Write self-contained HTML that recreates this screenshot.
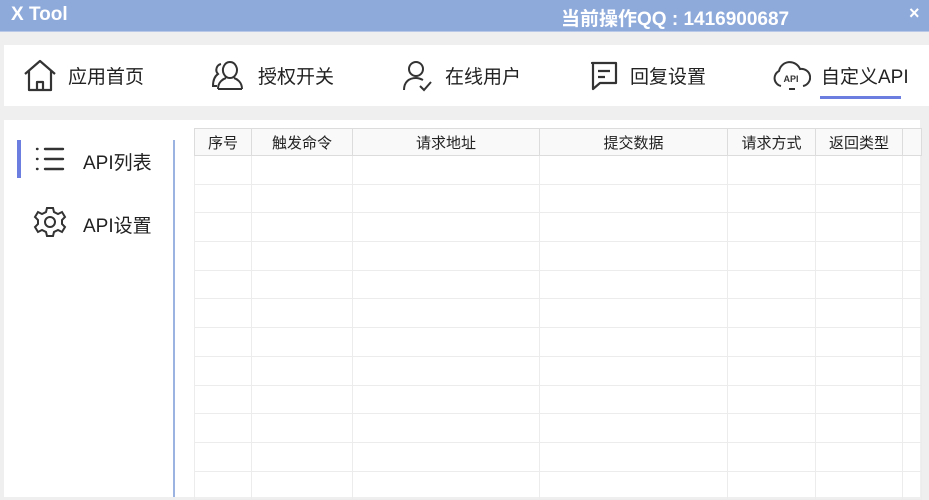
<!DOCTYPE html>
<html><head><meta charset="utf-8"><style>
*{margin:0;padding:0;box-sizing:border-box}
body{width:929px;height:497px;background:#efefef;font-family:"Liberation Sans","Noto Sans CJK SC",sans-serif;position:relative;overflow:hidden;color:#222}
.title{position:absolute;left:0;top:0;width:929px;height:32px;background:#8eaadb;border-bottom:1px solid #b8c8e6;color:#fff;font-weight:bold}
.abs{position:absolute}
.nav{position:absolute;left:4px;top:45px;width:925px;height:61px;background:#fff}
.ni{position:absolute;top:0;height:61px;display:flex;align-items:center;font-size:19px;color:#222}
.ni svg{margin-right:10px}
.main{position:absolute;left:4px;top:120px;width:916px;height:377px;background:#fff}
table{position:absolute;left:194px;top:128px;border-collapse:collapse;font-size:15px}
td{border:1px solid #ececec;height:28.7px;padding:0}
th{border:1px solid #dcdcdc;background:#f9f9f9;height:27px;font-weight:normal;text-align:center;color:#222}
</style></head><body>
<div class="title">
<span class="abs" style="left:11px;top:4px;font-size:19px">X Tool</span>
<span class="abs" style="left:561px;top:4px;font-size:19px">当前操作QQ : 1416900687</span>
<span class="abs" style="left:909px;top:3px;font-size:18px">×</span>
</div>
<div class="nav">
<div class="ni" style="left:18px"><svg width="36" height="36" viewBox="0 0 36 36" fill="none" stroke="#333" stroke-width="2.2" stroke-linejoin="round"><path d="M3 16 L18 3 L33 16 M7 13 V32 H29 V13 M15 32 V24 H21 V32"/></svg>应用首页</div>
<div class="ni" style="left:206px"><svg width="38" height="36" viewBox="0 0 38 36" fill="none" stroke="#333" stroke-width="2"><path d="M20 4 a7 8 0 1 1 -0.1 0 Z M8 31 c0-7 5-10 8-11 M32 31 c0-7-5-10-8-11 M8 31 H32"/><path d="M11 6 a6 6 0 0 0 -3 10 c-3 2-5 5-5 12 h4"/></svg>授权开关</div>
<div class="ni" style="left:397px"><svg width="34" height="36" viewBox="0 0 34 36" fill="none" stroke="#333" stroke-width="2"><circle cx="15" cy="11" r="7"/><path d="M3 32 c0-8 5-12 12-12 c3 0 5 1 7 2 M19 28 l4 4 l7-8"/></svg>在线用户</div>
<div class="ni" style="left:584px"><svg width="32" height="34" viewBox="0 0 32 34" fill="none" stroke="#333" stroke-width="2.2" stroke-linejoin="round"><path d="M4 4 H28 V24 H12 L5 30 V4 Z M10 12 H22 M10 18 H17"/></svg>回复设置</div>
<div class="ni" style="left:767px"><svg width="40" height="36" viewBox="0 0 40 36" fill="none" stroke="#333" stroke-width="2"><path d="M10 28 a8 8 0 0 1 -2 -15 a11 11 0 0 1 21 -2 a8 8 0 0 1 3 17 M18 31 h6"/><text x="20" y="24" font-size="9" font-family="Liberation Sans" fill="#333" stroke="none" text-anchor="middle" font-weight="bold">API</text></svg>自定义API</div>
<div class="abs" style="left:816px;top:51px;width:81px;height:3px;background:#6c7fe1"></div>
</div>
<div class="main"></div>
<div class="abs" style="left:17px;top:140px;width:4px;height:38px;background:#6c7fe1"></div>
<div class="abs" style="left:173px;top:140px;width:2px;height:357px;background:#9bb3e0"></div>
<svg class="abs" style="left:35px;top:146px" width="30" height="26" viewBox="0 0 30 26" stroke="#333" stroke-width="2.4" stroke-linecap="round"><path d="M2 3 h0.5 M10 3 H28 M2 13 h0.5 M10 13 H28 M2 23 h0.5 M10 23 H28"/></svg>
<div class="abs" style="left:83px;top:148px;font-size:19px">API列表</div>
<svg class="abs" style="left:33px;top:205px" width="34" height="34" viewBox="0 0 34 34" fill="none" stroke="#333" stroke-width="2"><path d="M14 3 h6 l1 4 l4 2 l4-2 l3 5 l-3 3 v4 l3 3 l-3 5 l-4-2 l-4 2 l-1 4 h-6 l-1-4 l-4-2 l-4 2 l-3-5 l3-3 v-4 l-3-3 l3-5 l4 2 l4-2 Z"/><circle cx="17" cy="17" r="5"/></svg>
<div class="abs" style="left:83px;top:211px;font-size:19px">API设置</div>
<table>
<tr><th style="width:57px">序号</th><th style="width:101px">触发命令</th><th style="width:187px">请求地址</th><th style="width:188px">提交数据</th><th style="width:88px">请求方式</th><th style="width:87px">返回类型</th><th style="width:19px"></th></tr>
<tr><td></td><td></td><td></td><td></td><td></td><td></td><td></td></tr>
<tr><td></td><td></td><td></td><td></td><td></td><td></td><td></td></tr>
<tr><td></td><td></td><td></td><td></td><td></td><td></td><td></td></tr>
<tr><td></td><td></td><td></td><td></td><td></td><td></td><td></td></tr>
<tr><td></td><td></td><td></td><td></td><td></td><td></td><td></td></tr>
<tr><td></td><td></td><td></td><td></td><td></td><td></td><td></td></tr>
<tr><td></td><td></td><td></td><td></td><td></td><td></td><td></td></tr>
<tr><td></td><td></td><td></td><td></td><td></td><td></td><td></td></tr>
<tr><td></td><td></td><td></td><td></td><td></td><td></td><td></td></tr>
<tr><td></td><td></td><td></td><td></td><td></td><td></td><td></td></tr>
<tr><td></td><td></td><td></td><td></td><td></td><td></td><td></td></tr>
<tr><td></td><td></td><td></td><td></td><td></td><td></td><td></td></tr>
</table>
</body></html>
